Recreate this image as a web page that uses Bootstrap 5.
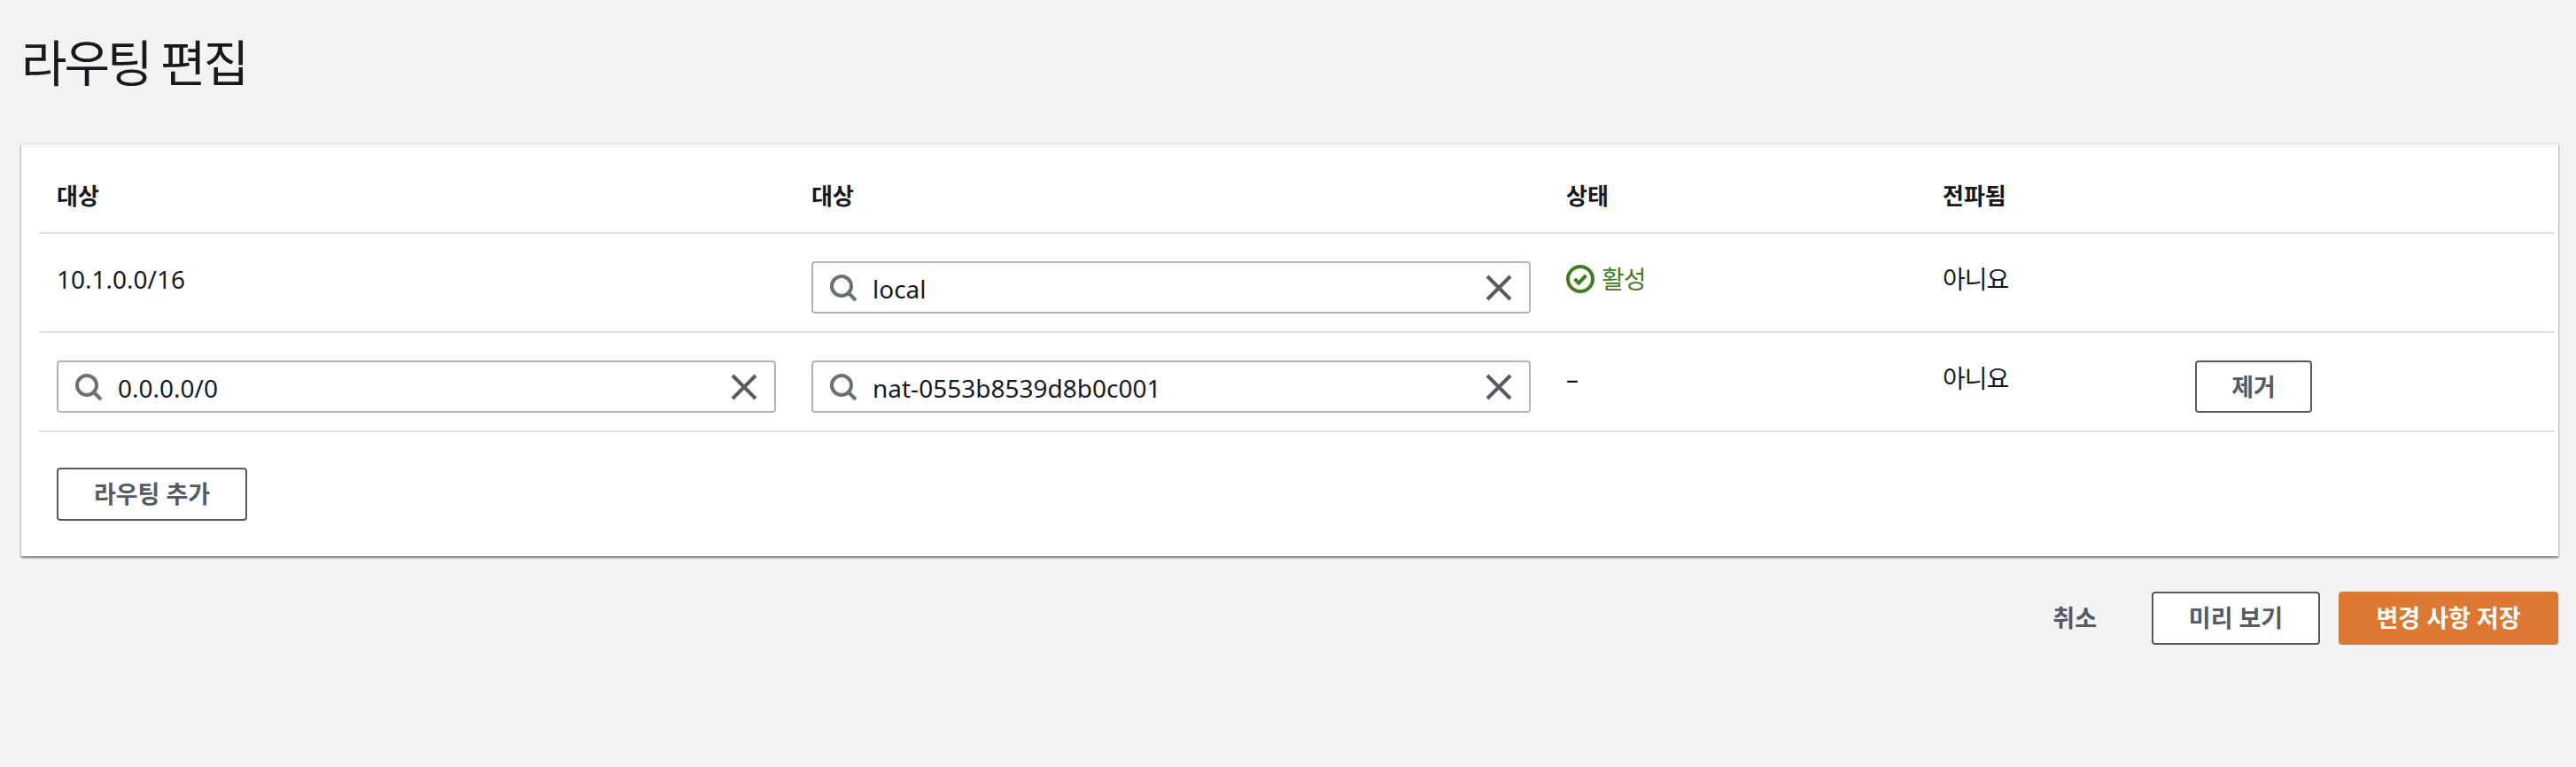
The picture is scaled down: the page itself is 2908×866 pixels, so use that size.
<!doctype html>
<html lang="ko">
<head>
<meta charset="utf-8">
<title>라우팅 편집</title>
<link href="https://cdn.jsdelivr.net/npm/bootstrap@5.3.0/dist/css/bootstrap.min.css" rel="stylesheet">
<style>
html,body{height:100%}
body{background:#f2f3f3;color:#16191f;font-family:"Noto Sans","Noto Sans CJK KR",sans-serif;font-size:28px;line-height:40px}
.page-wrap{padding:0 20px 0 24px}
.page-title{font-size:56px;line-height:64px;font-weight:400;letter-spacing:-3px;margin:0;padding:38px 0 61px 0;color:#16191f}
.route-card{border:0;border-radius:0;background:#fff;box-shadow:0 2px 2px rgba(0,28,36,.5),0 0 2px rgba(0,28,36,.3);padding:0 4px 40px 20px}
.route-table{table-layout:fixed;width:2840px;margin:0;--bs-table-bg:transparent;--bs-table-color:#16191f}
.route-table th,.route-table td{border-bottom:2px solid #e0e4e4;padding:31px 20px 20px 20px;vertical-align:top;font-size:28px;line-height:40px}
.route-table th{padding:38px 20px 21px;font-weight:700;font-size:26px}
.c1,.c2{width:852px}.c3{width:425px}.c4{width:285px}
.route-input{height:59px;border:2px solid #aab7b8;border-radius:4px;background:#fff;padding:0 18px;gap:17px}
.route-input .val{flex:1 1 auto;color:#16191f;line-height:40px;padding-top:2px;white-space:nowrap}
.ico{flex:none;display:block}
.aws-btn{font-family:inherit;font-size:27px;font-weight:700;line-height:40px;height:60px;padding:0;border:2px solid #545b64;border-radius:4px;background:#fff;color:#545b64;white-space:nowrap}
.aws-btn:hover{background:#fff;color:#545b64;border-color:#545b64}
.remove-btn{width:132px;height:59px}
.add-btn{width:215px}
.preview-btn{width:190px}
.save-btn{width:248px;background:#dd7832;border-color:#dd7832;color:#fff}
.save-btn:hover{background:#dd7832;border-color:#dd7832;color:#fff}
.cancel-link{font-size:27px;font-weight:700;color:#545b64;margin-right:41px}
.add-wrap{padding:40px 0 0 20px}
.foot-row{padding-top:40px;gap:21px}
.status-ok{color:#3b7f1e;gap:8px}
.ko-tight{letter-spacing:-1px}
</style>
</head>
<body>
<main class="page-wrap">
  <h1 class="page-title">라우팅 편집</h1>
  <section class="card route-card">
    <table class="table route-table">
      <colgroup><col class="c1"><col class="c2"><col class="c3"><col class="c4"><col></colgroup>
      <thead>
        <tr><th>대상</th><th>대상</th><th>상태</th><th>전파됨</th><th></th></tr>
      </thead>
      <tbody>
        <tr>
          <td>10.1.0.0/16</td>
          <td>
            <div class="route-input d-flex align-items-center">
              <svg class="ico" width="32" height="32" viewBox="0 0 16 16" fill="none" stroke="#687078" stroke-width="2"><circle cx="7" cy="7" r="5.5"/><path d="M11 11l4 4"/></svg>
              <span class="val">local</span>
              <svg class="ico" width="32" height="32" viewBox="0 0 16 16" fill="none" stroke="#545b64" stroke-width="2"><path d="M1.5 1.5l13 13M14.5 1.500l-13 13"/></svg>
            </div>
          </td>
          <td>
            <div class="status-ok d-flex align-items-center">
              <svg class="ico" width="32" height="32" viewBox="0 0 16 16" fill="none" stroke="#3b7f1e" stroke-width="2"><circle cx="8" cy="8" r="7"/><path d="M4.800 8l2.300 2.300 4.100-4.300"/></svg>
              <span class="ko-tight">활성</span>
            </div>
          </td>
          <td class="ko-tight">아니요</td>
          <td></td>
        </tr>
        <tr>
          <td>
            <div class="route-input d-flex align-items-center">
              <svg class="ico" width="32" height="32" viewBox="0 0 16 16" fill="none" stroke="#687078" stroke-width="2"><circle cx="7" cy="7" r="5.5"/><path d="M11 11l4 4"/></svg>
              <span class="val">0.0.0.0/0</span>
              <svg class="ico" width="32" height="32" viewBox="0 0 16 16" fill="none" stroke="#545b64" stroke-width="2"><path d="M1.5 1.5l13 13M14.5 1.500l-13 13"/></svg>
            </div>
          </td>
          <td>
            <div class="route-input d-flex align-items-center">
              <svg class="ico" width="32" height="32" viewBox="0 0 16 16" fill="none" stroke="#687078" stroke-width="2"><circle cx="7" cy="7" r="5.5"/><path d="M11 11l4 4"/></svg>
              <span class="val">nat-0553b8539d8b0c001</span>
              <svg class="ico" width="32" height="32" viewBox="0 0 16 16" fill="none" stroke="#545b64" stroke-width="2"><path d="M1.5 1.5l13 13M14.5 1.500l-13 13"/></svg>
            </div>
          </td>
          <td>–</td>
          <td class="ko-tight">아니요</td>
          <td><button type="button" class="btn aws-btn remove-btn">제거</button></td>
        </tr>
      </tbody>
    </table>
    <div class="add-wrap"><button type="button" class="btn aws-btn add-btn">라우팅 추가</button></div>
  </section>
  <div class="foot-row d-flex justify-content-end align-items-center">
    <span class="cancel-link">취소</span>
    <button type="button" class="btn aws-btn preview-btn">미리 보기</button>
    <button type="button" class="btn aws-btn save-btn">변경 사항 저장</button>
  </div>
</main>
<script src="https://cdn.jsdelivr.net/npm/bootstrap@5.3.0/dist/js/bootstrap.bundle.min.js"></script>
</body>
</html>
